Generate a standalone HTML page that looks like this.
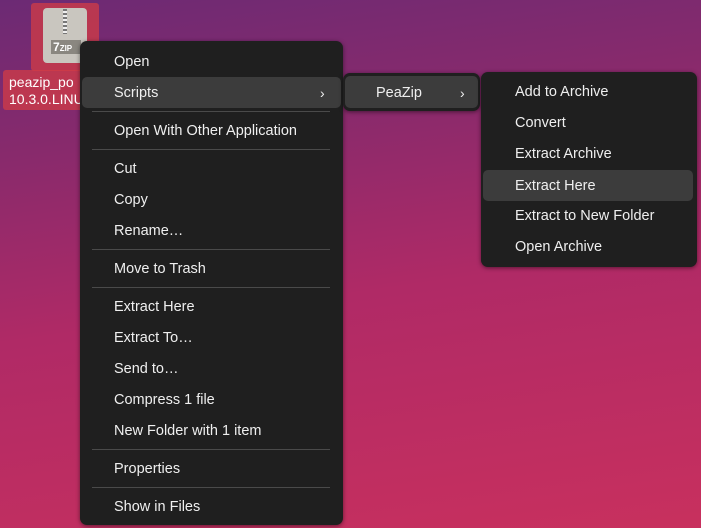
<!DOCTYPE html>
<html><head><style>
*{margin:0;padding:0;box-sizing:border-box}
body{width:701px;height:528px;overflow:hidden;position:relative;font-family:"Liberation Sans",sans-serif;font-size:14.5px;color:#efefef;
background:linear-gradient(172deg,#6c2a74 0%,#882a6c 25%,#b02a66 55%,#c8305e 100%);}
.m{position:absolute;background:#1f1f1f;border-radius:7px;box-shadow:0 1px 4px rgba(0,0,0,.5)}
.i{position:absolute;left:0;right:0;height:31px;line-height:33px}
.h{background:#3c3c3c;border-radius:5px}
.s{position:absolute;height:1px;background:#4a4a4a}
.ar{position:absolute;font-size:14px}
</style></head><body>
<div style="position:absolute;left:31px;top:3px;width:68px;height:68px;background:rgba(210,60,70,.75);border-radius:3px"></div>
<div style="position:absolute;left:43px;top:8px;width:44px;height:55px;background:#c9c6bf;border-radius:4px"></div>
<div style="position:absolute;left:63px;top:9px;width:4px;height:25px;background:repeating-linear-gradient(#777 0 2px,#eee 2px 4px)"></div>
<div style="position:absolute;left:51px;top:40px;width:30px;height:14px;background:#8a8780;color:#fff;font-size:12px;font-weight:bold;line-height:14px;padding-left:2px">7<span style="font-size:8px">ZIP</span></div>
<div style="position:absolute;left:3px;top:70px;width:100px;height:40px;background:rgba(210,60,70,.75);border-radius:3px;color:#fff;font-size:14px;line-height:17px;padding:4px 0 0 6px;overflow:hidden">peazip_po<br>10.3.0.LINU</div>

<div class="m" style="left:80px;top:41px;width:263px;height:484px">
<div class="i" style="top:5px;padding-left:34px">Open</div>
<div class="i h" style="top:36px;left:2px;right:2px;padding-left:32px">Scripts<span class="ar" style="left:238px">›</span></div>
<div class="s" style="top:70px;left:12px;right:13px"></div>
<div class="i" style="top:74px;padding-left:34px">Open With Other Application</div>
<div class="s" style="top:108px;left:12px;right:13px"></div>
<div class="i" style="top:112px;padding-left:34px">Cut</div>
<div class="i" style="top:143px;padding-left:34px">Copy</div>
<div class="i" style="top:174px;padding-left:34px">Rename…</div>
<div class="s" style="top:208px;left:12px;right:13px"></div>
<div class="i" style="top:212px;padding-left:34px">Move to Trash</div>
<div class="s" style="top:246px;left:12px;right:13px"></div>
<div class="i" style="top:250px;padding-left:34px">Extract Here</div>
<div class="i" style="top:281px;padding-left:34px">Extract To…</div>
<div class="i" style="top:312px;padding-left:34px">Send to…</div>
<div class="i" style="top:343px;padding-left:34px">Compress 1 file</div>
<div class="i" style="top:374px;padding-left:34px">New Folder with 1 item</div>
<div class="s" style="top:408px;left:12px;right:13px"></div>
<div class="i" style="top:412px;padding-left:34px">Properties</div>
<div class="s" style="top:446px;left:12px;right:13px"></div>
<div class="i" style="top:450px;padding-left:34px">Show in Files</div>
</div>

<div class="m" style="left:343px;top:73px;width:137px;height:38px">
<div class="i h" style="top:3px;left:2px;right:2px;padding-left:31px;height:32px;line-height:34px">PeaZip<span class="ar" style="left:115px">›</span></div>
</div>

<div class="m" style="left:481px;top:72px;width:216px;height:195px">
<div class="i" style="top:4px;padding-left:34px">Add to Archive</div>
<div class="i" style="top:35px;padding-left:34px">Convert</div>
<div class="i" style="top:66px;padding-left:34px">Extract Archive</div>
<div class="i h" style="top:98px;left:2px;right:4px;padding-left:32px">Extract Here</div>
<div class="i" style="top:128px;padding-left:34px">Extract to New Folder</div>
<div class="i" style="top:159px;padding-left:34px">Open Archive</div>
</div>
</body></html>
